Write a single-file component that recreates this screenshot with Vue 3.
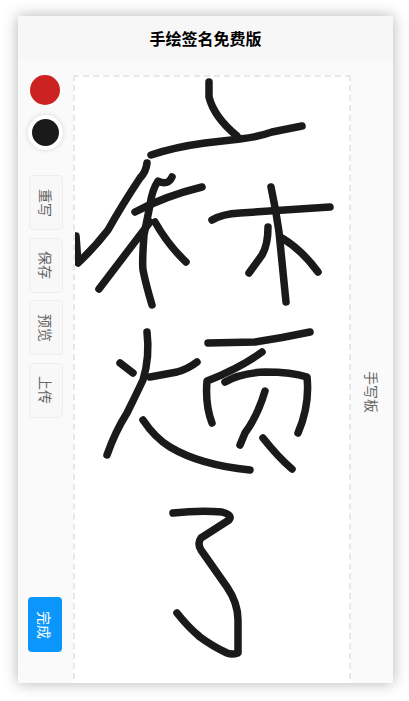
<script setup>
const tools = ['重写', '保存', '预览', '上传']
const strokes = [
  'M209 82 L209 97 Q214 117 237 136',
  'M151 155 Q175 147 205 143 L240 139 Q258 137 272 132 L302 126',
  'M147 163 Q146 172 140 178 Q122 205 108 230 Q95 247 78 263 L76 236',
  'M172 177 Q168 186 158 181 Q152 190 150 205 L144 235 Q142 262 143 270 Q146 285 152 305',
  'M135 212 Q165 196 202 187',
  'M150 222 Q125 255 99 289',
  'M155 222 Q168 245 186 262',
  'M212 220 Q222 214 240 213 L330 207',
  'M271 187 Q276 210 279 232 L286 302',
  'M268 227 Q268 245 262 255 L249 273',
  'M282 238 Q302 250 318 272',
  'M147 332 Q150 357 143 380 Q135 397 127 413 Q115 432 107 455',
  'M120 363 L133 373',
  'M150 377 L177 372 Q188 369 197 362',
  'M143 420 Q155 438 170 447 Q200 465 250 470',
  'M208 343 L255 342 Q282 338 310 332',
  'M262 352 Q240 368 207 381 Q205 405 212 423',
  'M225 382 Q240 373 265 372 Q292 372 307 377 Q310 405 298 433',
  'M265 391 Q258 415 245 433 L240 445',
  'M263 438 Q278 457 292 469',
  'M173 513 Q200 510 222 512 Q233 515 229 520 L201 538 Q197 543 201 550 L227 587 Q238 603 238 620 L238 653 Q232 655 227 653 Q212 646 200 637 Q188 627 177 613'
]
</script>

<template>
  <div class="page">
    <section class="card">
      <header class="title">手绘签名免费版</header>
      <div class="body">
        <aside class="side">
          <span class="dot red"></span>
          <span class="dot black"></span>
          <button v-for="t in tools" :key="t" class="tool"><span class="rot">{{ t }}</span></button>
          <button class="done"><span class="rot">完成</span></button>
        </aside>
        <div class="board">
          <svg class="ink" viewBox="75 77 274 610">
            <path v-for="(d, i) in strokes" :key="i" :d="d" />
          </svg>
        </div>
        <div class="label"><span class="rot">手写板</span></div>
      </div>
    </section>
  </div>
</template>

<style scoped>
.page {
  box-sizing: border-box;
  height: 701px;
  padding: 16px 16px 18px 18px;
  font-family: "Noto Sans CJK SC", "Liberation Sans", sans-serif;
}
.card {
  height: 100%;
  display: flex;
  flex-direction: column;
  background: #fafafa;
  box-shadow: 0 0 14px rgba(0, 0, 0, 0.3);
}
.title {
  height: 44px;
  flex: none;
  display: flex;
  align-items: center;
  justify-content: center;
  background: #f7f7f7;
  font-size: 16px;
  font-weight: 700;
  color: #000;
}
.body {
  flex: 1;
  min-height: 0;
  display: flex;
  overflow: hidden;
}
.side {
  width: 55px;
  flex: none;
  display: flex;
  flex-direction: column;
  align-items: flex-start;
  padding: 15px 0 31px 12px;
  box-sizing: border-box;
}
.dot {
  display: block;
  border-radius: 50%;
}
.red {
  width: 30px;
  height: 30px;
  background: #cc2222;
}
.black {
  width: 27px;
  height: 27px;
  margin: 14px 0 29px 2px;
  background: #1a1a1a;
  box-shadow: 0 0 0 4px #fff, 0 0 4px 5px rgba(0, 0, 0, 0.1);
}
.tool,
.done {
  display: flex;
  align-items: center;
  justify-content: center;
  box-sizing: border-box;
  flex: none;
  width: 34px;
  height: 55px;
  padding: 0;
  font-family: inherit;
  font-size: 14px;
  line-height: 1;
  border-radius: 4px;
}
.tool {
  margin: 0 0 7.5px -1px;
  border: 1px solid #eee;
  background: #f8f8f8;
  color: #666;
}
.done {
  margin: auto 0 0 -2px;
  border: 0;
  background: #0a96fa;
  color: #fff;
}
.rot {
  display: block;
  white-space: nowrap;
  transform: rotate(90deg);
}
.board {
  width: 278px;
  height: 614px;
  flex: none;
  box-sizing: border-box;
  border: 2px dashed #e8e8e8;
  margin-top: 15px;
  background: #fff;
}
.ink {
  display: block;
  width: 274px;
  height: 610px;
}
.ink path {
  fill: none;
  stroke: #1a1a1a;
  stroke-width: 7.5;
  stroke-linecap: round;
  stroke-linejoin: round;
}
.label {
  flex: 1;
  display: flex;
  align-items: center;
  justify-content: center;
  font-size: 14px;
  color: #666;
  padding-top: 41px;
}
</style>

<style>
body {
  background: #fff;
}
</style>
